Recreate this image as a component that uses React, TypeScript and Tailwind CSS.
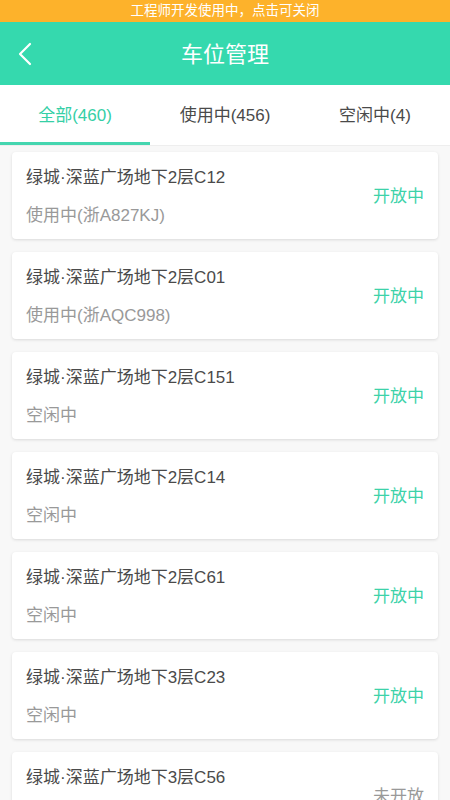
const font = { fontFamily: '"Liberation Sans", "Noto Sans CJK SC", sans-serif' }

const spaces = [
  { name: '绿城·深蓝广场地下2层C12', state: '使用中(浙A827KJ)', open: true },
  { name: '绿城·深蓝广场地下2层C01', state: '使用中(浙AQC998)', open: true },
  { name: '绿城·深蓝广场地下2层C151', state: '空闲中', open: true },
  { name: '绿城·深蓝广场地下2层C14', state: '空闲中', open: true },
  { name: '绿城·深蓝广场地下2层C61', state: '空闲中', open: true },
  { name: '绿城·深蓝广场地下3层C23', state: '空闲中', open: true },
  { name: '绿城·深蓝广场地下3层C56', state: '空闲中', open: false },
]

const tabs = ['全部(460)', '使用中(456)', '空闲中(4)']

export default function App() {
  return (
    <div className="w-[450px] h-[800px] overflow-hidden bg-[#f8f8f8]" style={font}>
      <div className="h-[22px] bg-[#fdb22b] flex items-center justify-center text-[13.5px] text-white">
        工程师开发使用中，点击可关闭
      </div>
      <div className="relative h-[63px] bg-[#35d9ae] flex items-center justify-center">
        <svg className="absolute left-[17px] top-[20px]" width="16" height="24" viewBox="0 0 16 24" fill="none">
          <path d="M13 2L3 12l10 10" stroke="white" strokeWidth="2.2" strokeLinecap="round" strokeLinejoin="round" />
        </svg>
        <span className="text-[22px] text-white pt-[2px]">车位管理</span>
      </div>
      <div className="h-[61px] bg-white flex border-b border-[#eeeeee]">
        {tabs.map((t, i) => (
          <div key={t} className="flex-1 relative flex items-center justify-center pt-[2px]">
            <span className={i === 0 ? 'text-[17px] text-[#35cfa6]' : 'text-[17px] text-[#4a4a4a]'}>{t}</span>
            {i === 0 && <div className="absolute left-0 right-0 bottom-0 h-[3px] bg-[#45d6b0]" />}
          </div>
        ))}
      </div>
      <div className="flex flex-col gap-[13px] px-3 pt-[6px]">
        {spaces.map((s) => (
          <div
            key={s.name}
            className="h-[87px] bg-white rounded-[4px] shadow-[0_1px_3px_rgba(0,0,0,0.12)] flex items-center pl-[14px] pr-[14px] pt-[2px]"
          >
            <div className="flex-1 flex flex-col gap-[14px]">
              <span className="text-[17px] leading-[24px] text-[#4a4a4a]">{s.name}</span>
              <span className="text-[17px] leading-[24px] text-[#999999]">{s.state}</span>
            </div>
            <span className={s.open ? 'text-[17px] text-[#3dd2a9]' : 'text-[17px] text-[#999999]'}>
              {s.open ? '开放中' : '未开放'}
            </span>
          </div>
        ))}
      </div>
    </div>
  )
}
